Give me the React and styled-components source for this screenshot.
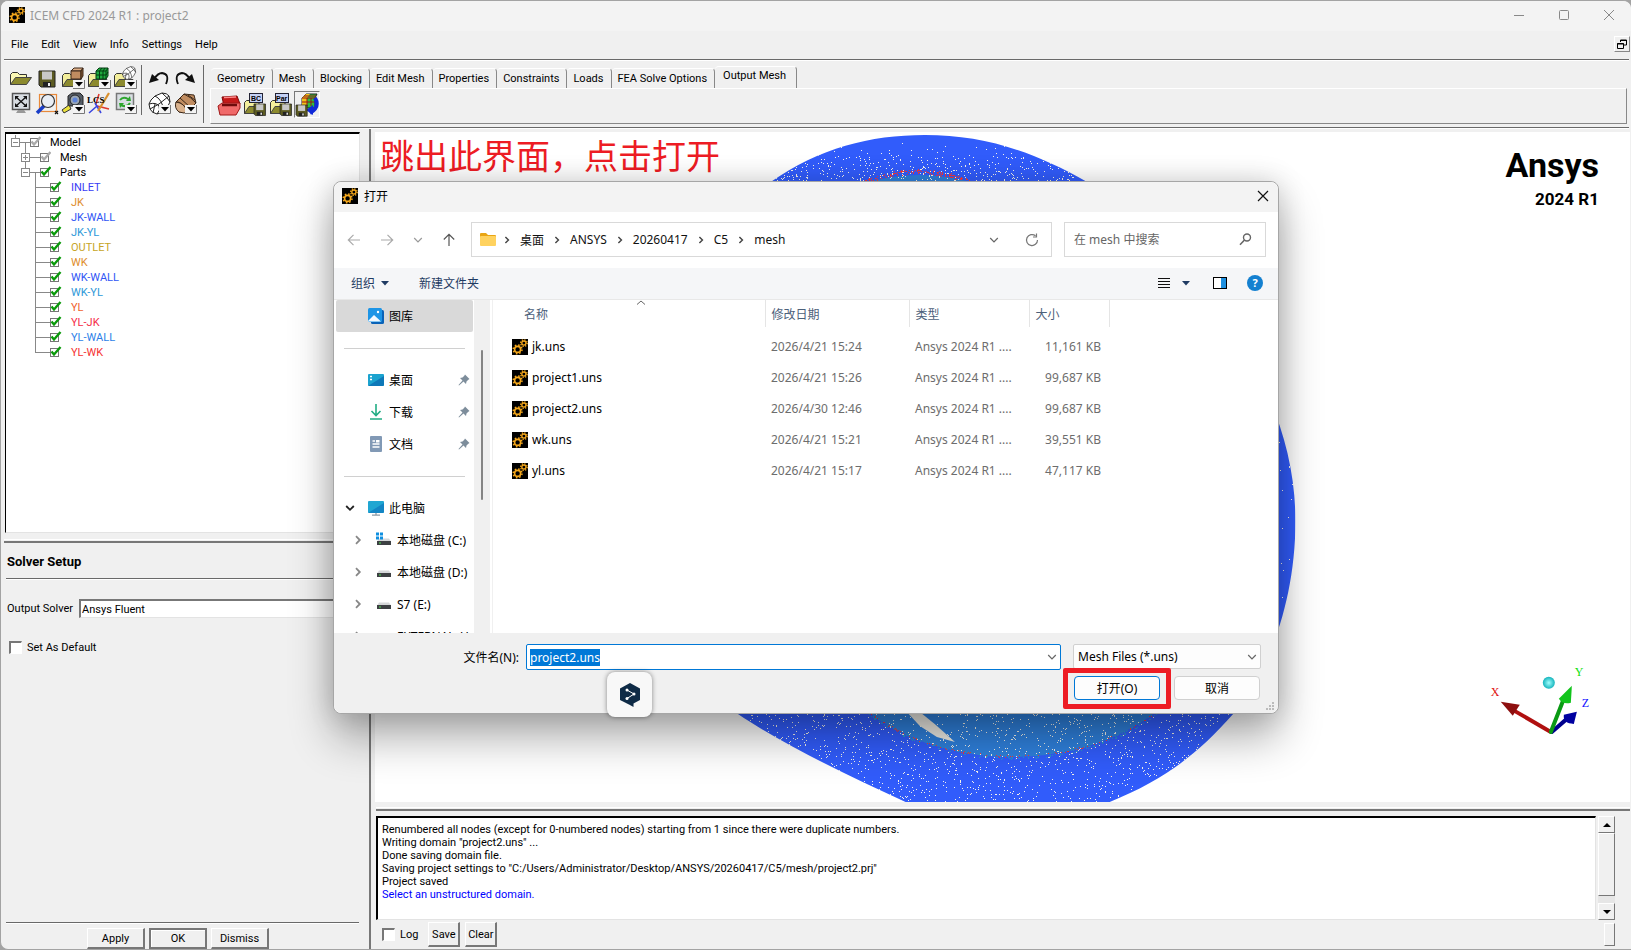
import React, { useEffect, useRef } from 'react' ;
import styled, { createGlobalStyle, css } from 'styled-components' ;

const uiFont = `Roboto, "Liberation Sans", sans-serif` ;
const winFont = `"Noto Sans", "Noto Sans CJK SC", sans-serif` ;

const GlobalStyle = createGlobalStyle`
    * { box-sizing : border-box ; }
    body {
        margin : 0 ;
        background : #a3a3a3 ;
        font-family : ${uiFont} ;
        font-size : 11px ;
        color : #000 ;
    }
    button, input, select {
        font : inherit ;
        color : inherit ;
        margin : 0 ;
    }
    svg { display : block ; flex : none ; }
`;

// main window
const Window = styled.div`
    position : relative ;
    height : 100vh ;
    min-height : 720px ;
    display : flex ;
    flex-direction : column ;
    background : #f0f0f0 ;
    border : 1px solid #a3a3a3 ;
    border-right : 0 ;
    border-radius : 8px 8px 0 8px ;
    overflow : hidden ;
`;

const TitleBar = styled.header`
    height : 30px ;
    padding : 0 0 2px 8px ;
    display : flex ;
    align-items : center ;
    gap : 5px ;
    background : #f3f3f3 ;
    color : #999 ;
    font-family : ${winFont} ;
    font-size : 12px ;
`;

const WindowButtons = styled.div`
    margin-left : auto ;
    display : flex ;
`;

const PlainButton = styled.button`
    padding : 0 ;
    border : 0 ;
    background : none ;
    display : flex ;
    align-items : center ;
    justify-content : center ;
`;

const WindowButton = styled(PlainButton)`
    width : 45px ;
    height : 28px ;
`;

const MenuBar = styled.nav`
    height : 28px ;
    margin : 0 1px 0 3px ;
    padding : 0 0 2px 7px ;
    display : flex ;
    align-items : center ;
    gap : 13px ;
`;

const RestoreButton = styled(PlainButton)`
    width : 16px ;
    height : 16px ;
    margin-left : auto ;
    border : 1px solid #fff ;
    border-right-color : #888 ;
    border-bottom-color : #888 ;
`;

const Rule = styled.div`
    height : 2px ;
    flex : none ;
    margin : ${props => props.$inset ? '0 10px 0 5px' : '0 2px 0 3px'} ;
    background : #fff ;
    border-top : 1px solid #696969 ;
`;

const ToolArea = styled.div`
    height : 66px ;
    padding : 4px 4px 0 7px ;
    display : flex ;
`;

const IconGrid = styled.div`
    display : grid ;
    grid-template-columns : repeat(${props => props.$cols}, 26px) ;
    grid-auto-rows : 25px ;
    align-content : start ;
    height : ${props => props.$tall ? '58px' : '50px'} ;
    padding-right : ${props => props.$tall ? '5px' : '3px'} ;
    margin-right : 4px ;
    border-right : 1px solid #696969 ;
`;

const Notebook = styled.div`
    flex : 1 ;
    min-width : 0 ;
    margin-left : 2px ;
    display : flex ;
    flex-direction : column ;
`;

const TabRow = styled.div`
    height : 23px ;
    padding-left : 1px ;
    display : flex ;
    align-items : flex-end ;
`;

const Tab = styled.button`
    height : ${props => props.$active ? '22px' : '20px'} ;
    padding : ${props => props.$active ? '0 10px 5px 8px' : '0 7px 1px 6px'} ;
    border : 0 ;
    border-top : 1px solid #fff ;
    border-right : 1px solid #888 ;
    border-radius : 4px 4px 0 0 ;
    background : #f0f0f0 ;
    white-space : nowrap ;
`;

const ToolPane = styled.div`
    height : 36px ;
    padding : 2px 0 0 5px ;
    display : flex ;
    border : 1px solid #fff ;
    border-right-color : #888 ;
    border-bottom-color : #888 ;
`;

const PaneButton = styled(PlainButton)`
    width : 26px ;
    height : 27px ;
    border : 1px solid transparent ;
    ${props => props.$active && css`border-color : #777 #fff #fff #777 ;`}
`;

const ToolButton = styled(PlainButton)`
    width : 26px ;
    height : 25px ;
`;

const Workspace = styled.div`
    flex : 1 ;
    min-height : 0 ;
    display : grid ;
    grid-template-columns : 370px minmax(0, 1fr) ;
`;

const LeftColumn = styled.aside`
    display : flex ;
    flex-direction : column ;
    min-height : 0 ;
    padding-top : 3px ;
    border-right : 2px solid #777 ;
`;

const Sunken = css`
    background : #fff ;
    border : 2px solid #000 ;
    border-right : 1px solid #e3e3e3 ;
    border-bottom : 1px solid #e3e3e3 ;
`;

const TreePane = styled.div`
    ${Sunken}
    height : 401px ;
    margin : 0 9px 0 4px ;
    padding : 1px 0 0 5px ;
    border-left-width : 1px ;
`;

const TreeRow = styled.div`
    height : 15px ;
    padding-left : ${props => props.$depth * 10}px ;
    display : flex ;
    align-items : center ;
    gap : 9px ;
    color : ${props => props.$color || '#000'} ;
    line-height : 15px ;
`;

const Sash = styled.div`
    height : 4px ;
    flex : none ;
    margin : ${props => props.$wide ? '5px 0 0 1px' : '6px 0 0 3px'} ;
    border-top : 1px solid #fff ;
    border-bottom : 2px solid #777 ;
`;

const SolverTitle = styled.h2`
    margin : 0 ;
    padding : 11px 6px 9px ;
    font-size : 13px ;
    line-height : 15px ;
`;

const SolverForm = styled.form`
    flex : 1 ;
    display : flex ;
    flex-direction : column ;
`;

const Field = styled.label`
    margin-top : 19px ;
    padding-left : 6px ;
    display : flex ;
    align-items : center ;
    gap : 6px ;
`;

const Entry = styled.input`
    flex : 1 ;
    min-width : 0 ;
    height : 19px ;
    padding : 0 1px ;
    border : 2px solid #777 ;
    border-right : 0 ;
    border-bottom : 1px solid #e3e3e3 ;
    outline : 0 ;
`;

const CheckLabel = styled.label`
    display : flex ;
    align-items : center ;
    gap : 5px ;
    padding-left : ${props => props.$form ? '8px' : '0'} ;
    margin-top : ${props => props.$form ? '23px' : '0'} ;
`;

const CheckBox = styled.input`
    appearance : none ;
    width : 13px ;
    height : 13px ;
    border : 2px solid #777 ;
    border-right : 1px solid #fff ;
    border-bottom : 1px solid #fff ;
    background : #fff ;
`;

const FormButtons = styled.div`
    display : flex ;
    gap : 4px ;
    padding : 4px 0 0 86px ;
`;

const FlatButton = styled.button`
    width : ${props => props.$small ? '32px' : '58px'} ;
    height : ${props => props.$small ? '25px' : '21px'} ;
    padding : 0 ;
    border : 1px solid #fff ;
    border-right : 2px solid #777 ;
    border-bottom : 2px solid #777 ;
    background : #f0f0f0 ;
    ${props => props.$main && css`
        border : 2px solid #777 ;
        box-shadow : inset 1px 1px #fff ;
    `}
`;

const RightColumn = styled.section`
    display : flex ;
    flex-direction : column ;
    min-height : 0 ;
    min-width : 0 ;
    padding : 3px 1px 0 4px ;
`;

const Canvas = styled.div`
    position : relative ;
    flex : 1 ;
    min-height : 0 ;
    background : #fff ;
`;

const Scene = styled.svg`
    position : absolute ;
    inset : 0 ;
    width : 100% ;
    height : 100% ;
`;

const Note = styled.p`
    position : absolute ;
    left : 5px ;
    top : 1px ;
    margin : 0 ;
    color : #ed1c24 ;
    font-family : "Noto Sans CJK SC", sans-serif ;
    font-size : 34px ;
    line-height : 44px ;
    white-space : nowrap ;
`;

const Brand = styled.div`
    position : absolute ;
    right : 31px ;
    top : 12px ;
    text-align : right ;
    font-size : 34px ;
    font-weight : bold ;
    line-height : 42px ;

    small {
        display : block ;
        font-size : 17px ;
        line-height : 26px ;
    }
`;

const LogArea = styled.div`
    margin : 5px 4px 0 1px ;
    height : 104px ;
    display : flex ;
    gap : 2px ;
`;

const LogText = styled.div`
    ${Sunken}
    flex : 1 ;
    padding : 5px 4px ;
    line-height : 13px ;

    p { margin : 0 ; }
    p:last-child { color : #00f ; }
`;

const ScrollBar = styled.div`
    width : 17px ;
    margin-right : 11px ;
    display : flex ;
    flex-direction : column ;
    background : #e6e6e6 ;
`;

const ScrollButton = styled(PlainButton)`
    height : 17px ;
    border : 1px solid #fff ;
    border-right-color : #777 ;
    border-bottom-color : #777 ;
    background : #f0f0f0 ;
`;

const ScrollThumb = styled.div`
    flex : 1 ;
    margin-bottom : 7px ;
    border : 1px solid #fff ;
    border-right-color : #777 ;
    border-bottom-color : #777 ;
    background : #f0f0f0 ;
`;

const LogTools = styled.div`
    height : 29px ;
    padding : 0 15px 0 7px ;
    display : flex ;
    align-items : center ;
    gap : 5px ;

    label { margin-right : 5px ; }
`;

const Resizer = styled.div`
    width : 11px ;
    height : 23px ;
    margin-left : auto ;
    border : 1px solid #fff ;
    border-right-color : #777 ;
    border-bottom-color : #777 ;
`;

// file dialog
const Dialog = styled.section`
    position : absolute ;
    left : 332px ;
    top : 180px ;
    width : 946px ;
    height : 533px ;
    display : flex ;
    flex-direction : column ;
    background : #fff ;
    border : 1px solid #a6a6a6 ;
    border-radius : 8px ;
    box-shadow : 0 24px 44px rgba(0, 0, 0, 0.32), 0 0 28px rgba(0, 0, 0, 0.16) ;
    font-family : ${winFont} ;
    font-size : 12px ;
`;

const DialogTitle = styled.header`
    height : 30px ;
    padding : 0 9px 2px 8px ;
    display : flex ;
    align-items : center ;
    gap : 6px ;
    background : #f3f3f3 ;
    border-radius : 8px 8px 0 0 ;

    button { margin-left : auto ; }
`;

const NavRow = styled.div`
    height : 56px ;
    padding : 0 12px 1px 13px ;
    display : flex ;
    align-items : center ;
`;

const NavButtons = styled.div`
    width : 124px ;
    display : flex ;
    align-items : center ;
    gap : 19px ;
`;

const AddressBar = styled.div`
    flex : 1 ;
    height : 35px ;
    margin-right : 12px ;
    padding : 0 12px 0 8px ;
    display : flex ;
    align-items : center ;
    gap : 7px ;
    border : 1px solid #d9d9d9 ;
`;

const Crumb = styled.a`
    margin : 0 2px ;
    color : #111 ;
    text-decoration : none ;
`;

const AddressTools = styled.div`
    margin-left : auto ;
    display : flex ;
    align-items : center ;
    gap : 26px ;
`;

const SearchBox = styled.label`
    width : 202px ;
    height : 35px ;
    padding : 0 13px 0 9px ;
    display : flex ;
    align-items : center ;
    border : 1px solid #d9d9d9 ;
`;

const SearchInput = styled.input`
    flex : 1 ;
    min-width : 0 ;
    padding : 0 ;
    border : 0 ;
    outline : 0 ;
    &::placeholder { color : #666 ; opacity : 1 ; }
`;

const CommandBar = styled.div`
    height : 32px ;
    padding : 0 15px 1px 17px ;
    display : flex ;
    align-items : center ;
    gap : 30px ;
    background : #f5f6f8 ;
    border-bottom : 1px solid #e8e8e8 ;
    color : #1f3b63 ;
`;

const Command = styled(PlainButton)`
    gap : 6px ;
`;

const CommandTools = styled.div`
    margin-left : auto ;
    display : flex ;
    align-items : center ;
    gap : 20px ;
`;

const DialogBody = styled.div`
    flex : 1 ;
    min-height : 0 ;
    display : flex ;
`;

const SideBar = styled.nav`
    width : 140px ;
    padding : 0 1px 0 2px ;
    overflow : hidden ;
`;

const SideItem = styled.button`
    width : 100% ;
    height : 32px ;
    padding : 0 3px 0 ${props => props.$pad || 32}px ;
    display : flex ;
    align-items : center ;
    gap : 5px ;
    border : 0 ;
    border-radius : 2px ;
    background : ${props => props.$active ? '#d9d9d9' : 'none'} ;
    white-space : nowrap ;
    text-align : left ;

    span { flex : 1 ; }
`;

const SideRule = styled.hr`
    height : 1px ;
    margin : 16px 8px 15px ;
    border : 0 ;
    background : #d0d0d0 ;
`;

const SideScroll = styled.div`
    width : 16px ;
    padding : 50px 7px 0 ;
    background : #f0f0f0 ;

    &::before {
        content : "" ;
        display : block ;
        height : 150px ;
        background : #858585 ;
        border-radius : 1px ;
    }
`;

const FilePane = styled.div`
    flex : 1 ;
    margin-left : 2px ;
    border-left : 1px solid #f0f0f0 ;
`;

const FileTable = styled.table`
    border-collapse : collapse ;
    table-layout : fixed ;
    width : 616px ;
    color : #6d6d6d ;
`;

const HeadCell = styled.th`
    position : relative ;
    width : ${props => props.$width}px ;
    height : 27px ;
    padding : 0 6px ;
    border-right : 1px solid #e5e5e5 ;
    color : #4c607a ;
    font-weight : normal ;
    text-align : left ;

    &:first-child { padding-left : 31px ; }
`;

const SortMark = styled.svg`
    position : absolute ;
    left : 50% ;
    top : 0 ;
    margin-left : 7px ;
`;

const FileRow = styled.tr`
    height : 31px ;
`;

const FileCell = styled.td`
    padding : 8px 8px 0 6px ;
    white-space : nowrap ;
    text-align : ${props => props.$right ? 'right' : 'left'} ;
`;

const FileName = styled.div`
    padding-left : 13px ;
    display : flex ;
    align-items : center ;
    gap : 4px ;
    color : #000 ;
`;

const DialogFooter = styled.footer`
    height : 80px ;
    padding : 11px 17px 0 ;
    display : grid ;
    grid-template-columns : 175px 1fr 188px ;
    grid-template-rows : 26px 24px ;
    row-gap : 6px ;
    column-gap : 0 ;
    background : #f0f0f0 ;
    border-radius : 0 0 8px 8px ;
`;

const NameLabel = styled.label`
    align-self : center ;
    padding-right : 7px ;
    text-align : right ;
`;

const NameBox = styled.div`
    margin-right : 12px ;
    padding : 0 3px ;
    display : flex ;
    align-items : center ;
    background : #fff ;
    border : 1px solid #0078d7 ;
    border-radius : 2px ;
`;

const NameInput = styled.input`
    flex : 1 ;
    min-width : 0 ;
    padding : 0 ;
    border : 0 ;
    outline : 0 ;
    &::selection { background : #0078d7 ; color : #fff ; }
`;

const TypeBox = styled.div`
    position : relative ;

    svg {
        position : absolute ;
        right : 4px ;
        top : 8px ;
        pointer-events : none ;
    }
`;

const TypeSelect = styled.select`
    appearance : none ;
    width : 100% ;
    height : 25px ;
    padding : 0 4px ;
    border : 1px solid #d0d0d0 ;
    border-radius : 2px ;
    background : #fdfdfd ;
`;

const Actions = styled.div`
    grid-column : 3 ;
    padding : 0 1px 0 1px ;
    display : flex ;
    justify-content : space-between ;
`;

const ActionButton = styled.button`
    position : relative ;
    width : 86px ;
    height : 24px ;
    padding : 0 ;
    border : 1px solid ${props => props.$main ? '#0078d7' : '#d0d0d0'} ;
    border-radius : 4px ;
    background : #fdfdfd ;

    ${props => props.$main && css`
        &::after {
            content : "" ;
            position : absolute ;
            inset : -9px -12px -10px -12px ;
            border : 5px solid #ed1c24 ;
            border-radius : 2px ;
        }
    `}
`;

const Grip = styled.svg`
    position : absolute ;
    right : 3px ;
    bottom : 2px ;
`;

const FloatingBadge = styled.button`
    position : absolute ;
    left : 273px ;
    bottom : -4px ;
    width : 45px ;
    height : 45px ;
    padding : 0 ;
    display : flex ;
    align-items : center ;
    justify-content : center ;
    border : 0 ;
    border-radius : 8px ;
    background : #f8f8f8 ;
    box-shadow : 0 0 5px rgba(0, 0, 0, 0.45) ;
`;

const GearIcon = () => (
    <svg width="16" height="16" viewBox="0 0 16 16" aria-hidden="true">
        <rect width="16" height="16" fill="#000" />
        <g fill="none" stroke="#f5a81c">
            <circle cx="5.6" cy="10.4" r="3" strokeWidth="1.6" />
            <circle cx="5.6" cy="10.4" r="4.4" strokeWidth="1.5" strokeDasharray="1.6 1.86" />
            <circle cx="11.9" cy="4.1" r="2.1" strokeWidth="1.3" />
            <circle cx="11.9" cy="4.1" r="3.3" strokeWidth="1.3" strokeDasharray="1.3 1.29" />
        </g>
    </svg>
) ;

const Chevron = ({ dir = 'down', size = 10, color = '#666', bold }) => {
    const turn = { down : 0, left : 90, up : 180, right : 270 } ;
    return (
        <svg width={size} height={size} viewBox="0 0 10 10" aria-hidden="true">
            <path d="M1.2 3L5 6.8L8.8 3" transform={`rotate(${turn[dir]} 5 5)`} fill="none" stroke={color} strokeWidth={bold ? 1.8 : 1.2} />
        </svg>
    ) ;
} ;

const ArrowIcon = ({ turn, color }) => (
    <svg width="14" height="14" viewBox="0 0 14 14" aria-hidden="true">
        <path d="M13 7H1.5M6.5 1.8L1.3 7L6.5 12.2" transform={`rotate(${turn} 7 7)`} fill="none" stroke={color} strokeWidth="1.2" />
    </svg>
) ;

const FolderBack = () => (
    <>
        <path d="M1.5 20.5V9.5L3.5 7.500H8.500L10.500 9.500H16V20.500Z" fill="#f3ee9b" stroke="#333" />
        <path d="M1.500 20.500L6 13.500H20L16 20.500Z" fill="#8c8a2e" stroke="#444" />
    </>
) ;

const OpenFolder = () => (
    <>
        <path d="M1.500 18.500V8.500L3.500 6.500H8.500L10.500 8.500H17.500V12" fill="#fbf8b4" stroke="#333" />
        <path d="M1.500 18.500L6.500 11.500H22.500L17.500 18.500Z" fill="#8c8a2e" stroke="#444" />
    </>
) ;

const Floppy = ({ x = 3, y = 5, s = 1 }) => (
    <g transform={`translate(${x} ${y}) scale(${s})`}>
        <path d="M0 0H16V16H2L0 14Z" fill="#5c5b22" stroke="#222" />
        <rect x="3" y="0.500" width="10" height="8" fill="#c8c8c8" />
        <rect x="4" y="11" width="8" height="5" fill="#222" />
        <rect x="9" y="12" width="2" height="3" fill="#eee" />
    </g>
) ;

const DropMark = () => (
    <>
        <rect x="12" y="14" width="11" height="8" fill="#f4f4f4" />
        <path d="M12 22.500H23.500V14" fill="none" stroke="#777" />
        <path d="M14 16H22L18 20.500Z" fill="#000" />
    </>
) ;

const MeshWire = ({ x = 0, y = 0, s = 1 }) => (
    <g transform={`translate(${x} ${y}) scale(${s})`} fill="#fff" stroke="#222" strokeWidth="1">
        <path d="M1 12Q2 8 7 4L14 1Q19 1 21 4L22 10Q20 15 16 19L9 22Q4 21 2 17Z" />
        <path d="M1 12Q8 10 11 14Q13 18 9 22M14 1Q20 6 22 10M7 4Q14 7 16 19M2 17L11 12L21 4M7 12L5 21" fill="none" />
    </g>
) ;

const Barrel = ({ x = 0, y = 0, s = 1 }) => (
    <g transform={`translate(${x} ${y}) scale(${s})`} stroke="#3a2718" strokeWidth="1">
        <path d="M2 10L10 2L20 3L22 11L13 20L5 20Z" fill="#c08c60" />
        <path d="M2 10Q8 9 13 20M10 2Q17 5 22 11M6 6L16 15M14 3L21 8" fill="none" />
        <path d="M2 10Q0 16 5 20Q11 22 13 20Q11 11 2 10Z" fill="#d9b18c" />
    </g>
) ;

const drawings = {
    open : <OpenFolder />,
    save : <Floppy x={4} y={5} />,
    geometry : (
        <>
            <FolderBack />
            <path d="M10 5L13 2H22L20 5Z" fill="#e0b088" stroke="#3a2718" />
            <rect x="10" y="5" width="10" height="8" fill="#c08c60" stroke="#3a2718" />
            <path d="M20 5L22 2V10L20 13Z" fill="#8a5c38" stroke="#3a2718" />
            <DropMark />
        </>
    ),
    mesh : (
        <>
            <FolderBack />
            <path d="M9 5L12 2H21V10L19 13H9Z" fill="#1faa3f" stroke="#053d12" />
            <path d="M9 9H19M12.500 5V13M16 5V13M9 5H19V13M19 5L21 2M19 9L21 6M12.500 5L15 2M16 5L18 2" stroke="#053d12" fill="none" />
            <DropMark />
        </>
    ),
    blocking : (
        <>
            <FolderBack />
            <MeshWire x={9} y={0} s={0.62} />
            <DropMark />
        </>
    ),
    undo : (
        <>
            <path d="M19 18Q23 8 15 7Q11 7 7 13" fill="none" stroke="#111" strokeWidth="1.800" />
            <path d="M2 17L5 8L12 14Z" fill="#111" />
        </>
    ),
    redo : (
        <>
            <path d="M5 18Q1 8 9 7Q13 7 17 13" fill="none" stroke="#111" strokeWidth="1.800" />
            <path d="M22 17L19 8L12 14Z" fill="#111" />
        </>
    ),
    fit : (
        <>
            <rect x="3.500" y="2.500" width="17" height="16" fill="#d8dde2" stroke="#555" strokeWidth="1.500" />
            <path d="M7 6L17 15M17 6L7 15" stroke="#111" strokeWidth="1.300" />
            <path d="M6 9V5H10ZM18 9V5H14ZM6 12V16H10ZM18 12V16H14Z" fill="#111" />
            <path d="M9 19H15L17 22H7Z" fill="#999" />
        </>
    ),
    zoom : (
        <>
            <rect x="4.500" y="3.500" width="17" height="17" fill="none" stroke="#e8893a" strokeWidth="1.200" />
            <path d="M9 15L2 22" stroke="#1a3ec8" strokeWidth="3.500" />
            <circle cx="13" cy="10" r="6.500" fill="#e9eef5" stroke="#333" strokeWidth="1.200" />
            <path d="M20 20L23 23M23 20L20 23" stroke="#111" strokeWidth="1.200" />
        </>
    ),
    measure : (
        <>
            <path d="M7 5L11 2H19L22 5V15H7Z" fill="#555d66" stroke="#222" />
            <circle cx="14" cy="9" r="5" fill="#9aa6b4" stroke="#222" />
            <circle cx="14" cy="9" r="2.500" fill="#5d83d8" />
            <path d="M1 19L8 14L10 18L3 22Z" fill="#ece23d" stroke="#333" />
            <DropMark />
        </>
    ),
    lcs : (
        <>
            <path d="M9 13L12 3M10 15L22 18" stroke="#e03a2e" strokeWidth="1.600" />
            <path d="M10 15L2 22M8 12L14 22" stroke="#3b46e0" strokeWidth="1.600" />
            <path d="M22 2L11 20" stroke="#d9902f" strokeWidth="2.200" />
            <text x="0" y="12" fontFamily="Liberation Serif, serif" fontSize="9" fontWeight="bold">LCS</text>
        </>
    ),
    refresh : (
        <>
            <rect x="3.500" y="2.500" width="17" height="16" fill="#d8dde2" stroke="#777" strokeWidth="1.500" />
            <path d="M7 9Q10 5 15 8M17 12Q14 17 8 14" fill="none" stroke="#2ea52e" strokeWidth="2" />
            <path d="M13 10L18 10L17 5ZM11 12L6 12L7 17Z" fill="#2ea52e" />
            <DropMark />
        </>
    ),
    wire : <><MeshWire x={1} y={1} /><DropMark /></>,
    solid : <><Barrel x={1} y={1} /><DropMark /></>,
    toolbox : (
        <>
            <path d="M5 4L20 3L23 11L7 13Z" fill="#c51a1a" stroke="#7c0808" />
            <path d="M7 4.500L19 4" stroke="#ff8a8a" strokeWidth="1.500" />
            <path d="M1 13L5 10H23V15L19 22H3Z" fill="#f06a6a" stroke="#a01818" />
            <path d="M5 12H20" stroke="#6d0c0c" strokeWidth="2.500" />
        </>
    ),
    bc : (
        <>
            <FolderBack />
            <rect x="6.500" y="0.500" width="13" height="9" fill="#c4d1f5" stroke="#223" />
            <text x="8" y="8" fontFamily="Liberation Sans, sans-serif" fontSize="7" fontWeight="bold">BC</text>
            <Floppy x={11} y={11} s={0.72} />
        </>
    ),
    par : (
        <>
            <FolderBack />
            <rect x="6.500" y="0.500" width="13" height="9" fill="#c4d1f5" stroke="#223" />
            <text x="7" y="8" fontFamily="Liberation Sans, sans-serif" fontSize="7" fontWeight="bold">Par</text>
            <Floppy x={11} y={11} s={0.72} />
        </>
    ),
    write : (
        <>
            <path d="M7 5L11 1H22L20 5V15H7Z" fill="#2fbf3c" stroke="#222" />
            <path d="M7 5L11 1H15L12 5V13H7Z" fill="#f0c419" />
            <path d="M9 3H21M7 9H20M12 5V13M16 5V13M7 5H20" stroke="#9a1414" fill="none" />
            <path d="M20 5Q25 14 15 20" fill="none" stroke="#1029d8" strokeWidth="4" />
            <path d="M11 17L18 12V22Z" fill="#1029d8" />
            <Floppy x={1} y={12} s={0.7} />
        </>
    ),
} ;

const ToolIcon = ({ name }) => (
    <svg width="24" height="24" viewBox="0 0 24 24" aria-hidden="true">{drawings[name]}</svg>
) ;

const TreeMark = ({ depth, kind, gray, last }) => (
    <svg width={depth === 2 ? 31 : 30} height="15" viewBox={depth === 2 ? '-8 0 31 15' : '0 0 30 15'} aria-hidden="true">
        <g stroke="#888" fill="none" shapeRendering="crispEdges">
            {kind && (
                <>
                    <path d="M8 7.500H19" />
                    <rect x="0.500" y="3.500" width="8" height="8" fill="#fff" />
                    <path d={kind === 'plus' ? 'M2 7.500H7M4.500 5V10' : 'M2 7.500H7'} />
                    {depth === 0 ? <path d="M4.500 0V3M14.500 8V15" /> : <path d="M4.500 0V3" />}
                    {depth === 1 && (kind === 'plus' ? <path d="M4.500 12V15" /> : <path d="M14.500 8V15" />)}
                </>
            )}
            {!kind && <path d={last ? 'M-3.500 0V7.500H11' : 'M-3.500 0V15M-3.500 7.500H11'} />}
        </g>
        <g transform={kind ? 'translate(19 0)' : 'translate(11 0)'}>
            <rect x="0.500" y="3.500" width="8" height="8" fill="#fff" stroke="#777" shapeRendering="crispEdges" />
            <path d="M1.500 6.500L4 9.500L10.500 2" fill="none" stroke={gray ? '#aaa' : '#0a9a0a'} strokeWidth="2.400" />
        </g>
    </svg>
) ;

const SideIcon = ({ name }) => (
    <svg width="16" height="16" viewBox="0 0 16 16" aria-hidden="true">
        {name === 'gallery' && (
            <>
                <rect x="3" y="2" width="13" height="14" rx="1.500" fill="#0a63b8" />
                <rect x="0" y="0" width="14" height="14" rx="1.500" fill="#1d95e6" />
                <path d="M0 13L6 7L13 13.500H0Z" fill="#f2f9ff" />
                <circle cx="10" cy="4" r="1.200" fill="#fff" />
            </>
        )}
        {name === 'desktop' && (
            <>
                <rect x="0" y="2" width="16" height="12" rx="1" fill="#1ba3cf" />
                <path d="M0 14L16 4V13L15 14Z" fill="#0e78b8" />
                <path d="M2 4.500H4M2 7.500H4" stroke="#fff" strokeWidth="1.500" />
            </>
        )}
        {name === 'download' && <path d="M8 0V11M3.500 7L8 11.500L12.500 7M2 15H14" fill="none" stroke="#22ad84" strokeWidth="1.600" />}
        {name === 'docs' && (
            <>
                <rect x="2" y="0" width="12" height="16" rx="1" fill="#8199b5" />
                <path d="M4.500 5H7M4.500 8H11.500M4.500 11H11.500" stroke="#fff" strokeWidth="1.300" />
                <rect x="8" y="4" width="3.500" height="2.500" fill="#fff" />
            </>
        )}
        {name === 'pc' && (
            <>
                <rect x="0" y="1" width="16" height="12" rx="1" fill="#20a6d2" />
                <path d="M0 13L16 3V12L15 13Z" fill="#1385c4" />
                <path d="M8 13V15M4 15.200H12" stroke="#8b99a5" strokeWidth="1.300" />
            </>
        )}
        {(name === 'drive' || name === 'system') && (
            <>
                <path d="M3 6.500H13L15 9.500H1Z" fill="#d5d7d9" />
                <rect x="1" y="9" width="14" height="4" fill="#3d4043" />
                <rect x="3" y="10.500" width="2" height="1" fill="#4ce04c" />
            </>
        )}
        {name === 'system' && <path d="M0 0.500H3V3.500H0ZM4 0.500H7V3.500H4ZM0 4.500H3V7.500H0ZM4 4.500H7V7.500H4Z" fill="#0f8fe0" />}
    </svg>
) ;

const Pin = () => (
    <svg width="12" height="12" viewBox="0 0 12 12" aria-hidden="true">
        <path d="M7 0.500L11.500 5L10.300 5.700L8.500 7.500L8 10L5.500 7.500L1 11.500L0.500 11L4.500 6.500L2 4L4.500 3.500L6.300 1.700Z" fill="#7d8d9b" />
    </svg>
) ;

const FolderIcon = () => (
    <svg width="16" height="14" viewBox="0 0 16 14" aria-hidden="true">
        <path d="M0 1Q0 0 1 0H6L8 2H15Q16 2 16 3V6H0Z" fill="#e9a513" />
        <rect x="0" y="3" width="16" height="10" rx="1" fill="#ffd25f" />
    </svg>
) ;

// fixed seed, so that the nodes stay in place between renders
const scatter = (count, seed, place) => {
    let s = seed ;
    const rnd = () => {
        s = (s * 16807) % 2147483647 ;
        return s / 2147483647 ;
    } ;
    let d = '' ;
    for (let i = 0 ; i < count ; i += 1) {
        const [x, y] = place(rnd) ;
        d += `M${Math.round(x)} ${Math.round(y)}h1v1h-1z` ;
    }
    return d ;
} ;

const topNodes = scatter(560, 77, r => [770 + r() * 320, 143 + Math.sqrt(r()) * 40]) ;
const bottomNodes = scatter(1700, 41, r => [740 + r() * 500, 706 + r() * 96]) ;
const sideNodes = scatter(20, 19, r => [1278 + r() * 14, 440 + r() * 180]) ;
const topRim = scatter(260, 7, r => {
    const a = (r() - 0.5) * 1.5 ;
    return [918 + Math.sin(a) * 112, 261 - Math.cos(a) * 92 + r() * 5] ;
}) ;
const bottomRim = scatter(260, 13, r => {
    const a = (r() - 0.5) * 1.9 ;
    return [1012 + Math.sin(a) * 190, 626 + Math.cos(a) * 128 + r() * 4] ;
}) ;
const bottomSparks = scatter(90, 29, r => {
    const a = (r() - 0.5) * 1.7 ;
    return [1012 + Math.sin(a) * 190, 626 + Math.cos(a) * 128 + r() * 2] ;
}) ;

const MeshScene = () => (
    <Scene viewBox="375 132 1255 669" preserveAspectRatio="xMidYMid slice" role="img" aria-label="Mesh model">
        <defs>
            <clipPath id="body">
                <path d="M660 330L771 182C820 148 870 135 925 135C985 135 1035 152 1087 182L1140 226C1220 300 1295 400 1295 520C1295 610 1262 680 1233 713C1190 762 1150 788 1080 812H930C870 785 790 748 738 713C690 650 650 400 660 330Z" />
            </clipPath>
            <radialGradient id="ball"><stop offset="0" stopColor="#a2ffff" /><stop offset="1" stopColor="#14b4bc" /></radialGradient>
        </defs>
        <g clipPath="url(#body)">
            <rect x="375" y="132" width="1255" height="669" fill="#315cfb" />
            <ellipse cx="920" cy="262" rx="130" ry="87" fill="#2f80dc" />
            <ellipse cx="1012" cy="626" rx="190" ry="130" fill="#2f80dc" />
            <g shapeRendering="crispEdges">
                <path d={topNodes + bottomNodes + sideNodes} fill="#f4f2ea" />
                <path d={topRim} fill="#f0393f" />
                <path d={bottomRim} fill="#2996c9" />
                <path d={bottomSparks} fill="#f03a3a" />
            </g>
            <path d="M904 708H916L936 724L955 741L937 736L920 725Z" fill="#efede6" />
        </g>
        <g strokeWidth="4" strokeLinecap="round">
            <path d="M1550 731L1512 709" stroke="#b01010" />
            <path d="M1551 731L1566 718" stroke="#00008c" />
            <path d="M1550 731L1563 698" stroke="#0a9a14" />
        </g>
        <path d="M1500 701L1519 704L1512 715Z" fill="#8d0f0f" />
        <path d="M1571 685L1558 698Q1562 704 1570 702Z" fill="#12c41c" />
        <path d="M1576 711L1563 714Q1562 723 1573 723Z" fill="#0000a0" />
        <circle cx="1548" cy="682" r="6" fill="url(#ball)" />
        <g fontFamily="Liberation Serif, serif" fontSize="12">
            <text x="1490" y="695" fill="#e01010">X</text>
            <text x="1574" y="675" fill="#10e010">Y</text>
            <text x="1581" y="706" fill="#1010ff">Z</text>
        </g>
    </Scene>
) ;

const tabs = ['Geometry', 'Mesh', 'Blocking', 'Edit Mesh', 'Properties', 'Constraints', 'Loads', 'FEA Solve Options', 'Output Mesh'] ;

const parts = [
    ['INLET', '#3a3cf5'],
    ['JK', '#de8d2b'],
    ['JK-WALL', '#2f55f5'],
    ['JK-YL', '#2d98d8'],
    ['OUTLET', '#c7a527'],
    ['WK', '#de8d2b'],
    ['WK-WALL', '#2f55f5'],
    ['WK-YL', '#2d98d8'],
    ['YL', '#f0622d'],
    ['YL-JK', '#f52c48'],
    ['YL-WALL', '#2d7fe8'],
    ['YL-WK', '#f53232'],
] ;

const files = [
    ['jk.uns', '2026/4/21 15:24', '11,161 KB'],
    ['project1.uns', '2026/4/21 15:26', '99,687 KB'],
    ['project2.uns', '2026/4/30 12:46', '99,687 KB'],
    ['wk.uns', '2026/4/21 15:21', '39,551 KB'],
    ['yl.uns', '2026/4/21 15:17', '47,117 KB'],
] ;

const drives = [
    ['system', '本地磁盘 (C:)'],
    ['drive', '本地磁盘 (D:)'],
    ['drive', 'S7 (E:)'],
    ['drive', 'EXTERNAL_U'],
] ;

const ToolGroup = ({ names, cols, tall }) => (
    <IconGrid $cols={cols} $tall={tall}>
        {names.map(name => (
            <ToolButton key={name} aria-label={name}><ToolIcon name={name} /></ToolButton>
        ))}
    </IconGrid>
) ;

const OpenDialog = () => {
    const nameRef = useRef(null) ;

    useEffect(() => {
        nameRef.current.focus() ;
        nameRef.current.select() ;
    }, []) ;

    return (
        <Dialog role="dialog" aria-label="打开">
            <DialogTitle>
                <GearIcon />
                打开
                <PlainButton aria-label="关闭">
                    <svg width="12" height="12" viewBox="0 0 12 12"><path d="M1 1L11 11M11 1L1 11" stroke="#111" strokeWidth="1.200" /></svg>
                </PlainButton>
            </DialogTitle>
            <NavRow>
                <NavButtons>
                    <PlainButton aria-label="后退"><ArrowIcon turn={0} color="#aaa" /></PlainButton>
                    <PlainButton aria-label="前进"><ArrowIcon turn={180} color="#aaa" /></PlainButton>
                    <PlainButton aria-label="最近"><Chevron color="#999" /></PlainButton>
                    <PlainButton aria-label="上移"><ArrowIcon turn={90} color="#555" /></PlainButton>
                </NavButtons>
                <AddressBar>
                    <FolderIcon />
                    {['桌面', 'ANSYS', '20260417', 'C5', 'mesh'].map(name => (
                        <React.Fragment key={name}>
                            <Chevron dir="right" size={8} color="#444" bold />
                            <Crumb href="#">{name}</Crumb>
                        </React.Fragment>
                    ))}
                    <AddressTools>
                        <PlainButton aria-label="历史"><Chevron /></PlainButton>
                        <PlainButton aria-label="刷新">
                            <svg width="14" height="14" viewBox="0 0 14 14">
                                <path d="M12.500 7A5.500 5.500 0 1 1 10.500 2.800M11.500 0.500V4H8" fill="none" stroke="#777" strokeWidth="1.200" />
                            </svg>
                        </PlainButton>
                    </AddressTools>
                </AddressBar>
                <SearchBox>
                    <SearchInput placeholder="在 mesh 中搜索" aria-label="搜索" />
                    <svg width="13" height="13" viewBox="0 0 13 13">
                        <circle cx="8" cy="4.500" r="3.500" fill="none" stroke="#666" strokeWidth="1.400" />
                        <path d="M5.500 7L1 11.800" stroke="#666" strokeWidth="1.600" />
                    </svg>
                </SearchBox>
            </NavRow>
            <CommandBar>
                <Command>组织 <svg width="8" height="5" viewBox="0 0 8 5"><path d="M0 0H8L4 4.500Z" fill="#1f3b63" /></svg></Command>
                <Command>新建文件夹</Command>
                <CommandTools>
                    <Command aria-label="视图">
                        <svg width="12" height="11" viewBox="0 0 12 11"><path d="M0 0.500H12M0 3.500H12M0 6.500H12M0 9.500H12" stroke="#111" /></svg>
                        <svg width="17" height="5" viewBox="-6 0 17 5"><path d="M0 0H8L4 4.500Z" fill="#1f3b63" /></svg>
                    </Command>
                    <Command aria-label="预览窗格">
                        <svg width="14" height="12" viewBox="0 0 14 12">
                            <rect x="0.500" y="0.500" width="13" height="11" fill="#fff" stroke="#000" />
                            <rect x="8" y="1" width="5" height="10" fill="#1e90e0" />
                        </svg>
                    </Command>
                    <Command aria-label="帮助">
                        <svg width="16" height="16" viewBox="0 0 16 16">
                            <circle cx="8" cy="8" r="8" fill="#1480d0" />
                            <text x="8" y="12" textAnchor="middle" fontSize="11" fontWeight="bold" fill="#fff">?</text>
                        </svg>
                    </Command>
                </CommandTools>
            </CommandBar>
            <DialogBody>
                <SideBar>
                    <SideItem $active><SideIcon name="gallery" /><span>图库</span></SideItem>
                    <SideRule />
                    <SideItem><SideIcon name="desktop" /><span>桌面</span><Pin /></SideItem>
                    <SideItem><SideIcon name="download" /><span>下载</span><Pin /></SideItem>
                    <SideItem><SideIcon name="docs" /><span>文档</span><Pin /></SideItem>
                    <SideRule />
                    <SideItem $pad={9}>
                        <Chevron color="#222" bold />
                        <svg width="3" height="1" />
                        <SideIcon name="pc" /><span>此电脑</span>
                    </SideItem>
                    {drives.map(([icon, name]) => (
                        <SideItem key={name} $pad={17}>
                            <Chevron dir="right" color="#888" bold />
                            <svg width="3" height="1" />
                            <SideIcon name={icon} /><span>{name}</span>
                        </SideItem>
                    ))}
                </SideBar>
                <SideScroll />
                <FilePane>
                    <FileTable>
                        <thead>
                            <tr>
                                <HeadCell $width={272}>名称<SortMark width="10" height="5" viewBox="0 0 10 5"><path d="M1 4.500L5 1L9 4.500" fill="none" stroke="#666" /></SortMark></HeadCell>
                                <HeadCell $width={144}>修改日期</HeadCell>
                                <HeadCell $width={120}>类型</HeadCell>
                                <HeadCell $width={80}>大小</HeadCell>
                            </tr>
                        </thead>
                        <tbody>
                            {files.map(([name, date, size]) => (
                                <FileRow key={name}>
                                    <FileCell><FileName><GearIcon />{name}</FileName></FileCell>
                                    <FileCell>{date}</FileCell>
                                    <FileCell>Ansys 2024 R1 ....</FileCell>
                                    <FileCell $right>{size}</FileCell>
                                </FileRow>
                            ))}
                        </tbody>
                    </FileTable>
                </FilePane>
            </DialogBody>
            <DialogFooter>
                <NameLabel htmlFor="file-name">文件名(N):</NameLabel>
                <NameBox>
                    <NameInput id="file-name" ref={nameRef} defaultValue="project2.uns" />
                    <PlainButton aria-label="文件列表"><Chevron /></PlainButton>
                </NameBox>
                <TypeBox>
                    <TypeSelect aria-label="文件类型"><option>Mesh Files (*.uns)</option></TypeSelect>
                    <Chevron />
                </TypeBox>
                <Actions>
                    <ActionButton $main>打开(O)</ActionButton>
                    <ActionButton>取消</ActionButton>
                </Actions>
            </DialogFooter>
            <Grip width="9" height="9" viewBox="0 0 9 9">
                <path d="M6 0h2v2h-2zM3 3h2v2h-2zM6 3h2v2h-2zM0 6h2v2h-2zM3 6h2v2h-2zM6 6h2v2h-2z" fill="#bbb" />
            </Grip>
            <FloatingBadge aria-label="翻译">
                <svg width="20" height="24" viewBox="0 0 20 24">
                    <path d="M10 0L20 5.500V17L13.500 20.500V24L9 21.500L0 17V5.500Z" fill="#0f2b46" />
                    <path d="M7 7L14 11L7 15.500" fill="none" stroke="#fff" strokeWidth="1" />
                    <circle cx="7" cy="7" r="1.500" fill="#fff" />
                    <circle cx="14" cy="11" r="1.500" fill="#fff" />
                    <circle cx="7" cy="15.500" r="1.500" fill="#fff" />
                </svg>
            </FloatingBadge>
        </Dialog>
    ) ;
} ;

const App = () => (
    <>
        <GlobalStyle />
        <Window>
            <TitleBar>
                <GearIcon />
                ICEM CFD 2024 R1 : project2
                <WindowButtons>
                    <WindowButton aria-label="Minimize"><svg width="10" height="10"><path d="M0 5.500H10" stroke="#888" /></svg></WindowButton>
                    <WindowButton aria-label="Maximize"><svg width="10" height="10"><rect x="0.500" y="0.500" width="9" height="9" rx="1" fill="none" stroke="#888" /></svg></WindowButton>
                    <WindowButton aria-label="Close"><svg width="10" height="10"><path d="M0 0L10 10M10 0L0 10" stroke="#888" /></svg></WindowButton>
                </WindowButtons>
            </TitleBar>
            <MenuBar>
                {['File', 'Edit', 'View', 'Info', 'Settings', 'Help'].map(name => (
                    <PlainButton key={name}>{name}</PlainButton>
                ))}
                <RestoreButton aria-label="Restore">
                    <svg width="10" height="10"><path d="M3.500 3V1H9.500V6H7M3 1.500H10M0.500 4.500H6.500V9.500H0.500ZM0 5H7" fill="none" stroke="#000" /></svg>
                </RestoreButton>
            </MenuBar>
            <Rule />
            <ToolArea>
                <ToolGroup cols={5} names={['open', 'save', 'geometry', 'mesh', 'blocking', 'fit', 'zoom', 'measure', 'lcs', 'refresh']} />
                <ToolGroup cols={2} tall names={['undo', 'redo', 'wire', 'solid']} />
                <Notebook>
                    <TabRow>
                        {tabs.map((name, index) => (
                            <Tab key={name} $active={index === tabs.length - 1}>{name}</Tab>
                        ))}
                    </TabRow>
                    <ToolPane>
                        {['toolbox', 'bc', 'par', 'write'].map(name => (
                            <PaneButton key={name} $active={name === 'write'} aria-label={name}><ToolIcon name={name} /></PaneButton>
                        ))}
                    </ToolPane>
                </Notebook>
            </ToolArea>
            <Rule />
            <Workspace>
                <LeftColumn>
                    <TreePane>
                        <TreeRow $depth={0}><TreeMark depth={0} kind="minus" gray />Model</TreeRow>
                        <TreeRow $depth={1}><TreeMark depth={1} kind="plus" gray />Mesh</TreeRow>
                        <TreeRow $depth={1}><TreeMark depth={1} kind="minus" />Parts</TreeRow>
                        {parts.map(([name, color], index) => (
                            <TreeRow key={name} $depth={2} $color={color}>
                                <TreeMark depth={2} last={index === parts.length - 1} />{name}
                            </TreeRow>
                        ))}
                    </TreePane>
                    <Sash />
                    <SolverTitle>Solver Setup</SolverTitle>
                    <Rule $inset />
                    <SolverForm onSubmit={e => e.preventDefault()}>
                        <Field>Output Solver <Entry defaultValue="Ansys Fluent" /></Field>
                        <CheckLabel $form><CheckBox type="checkbox" />Set As Default</CheckLabel>
                    </SolverForm>
                    <Rule $inset />
                    <FormButtons>
                        <FlatButton>Apply</FlatButton>
                        <FlatButton $main>OK</FlatButton>
                        <FlatButton>Dismiss</FlatButton>
                    </FormButtons>
                </LeftColumn>
                <RightColumn>
                    <Canvas>
                        <MeshScene />
                        <Note>跳出此界面，点击打开</Note>
                        <Brand>Ansys<small>2024 R1</small></Brand>
                    </Canvas>
                    <Sash $wide />
                    <LogArea>
                        <LogText>
                            <p>Renumbered all nodes (except for 0-numbered nodes) starting from 1 since there were duplicate numbers.</p>
                            <p>Writing domain "project2.uns" ...</p>
                            <p>Done saving domain file.</p>
                            <p>Saving project settings to "C:/Users/Administrator/Desktop/ANSYS/20260417/C5/mesh/project2.prj"</p>
                            <p>Project saved</p>
                            <p>Select an unstructured domain.</p>
                        </LogText>
                        <ScrollBar>
                            <ScrollButton aria-label="Scroll up"><svg width="8" height="4"><path d="M0 4L4 0L8 4Z" /></svg></ScrollButton>
                            <ScrollThumb />
                            <ScrollButton aria-label="Scroll down"><svg width="8" height="4"><path d="M0 0L4 4L8 0Z" /></svg></ScrollButton>
                        </ScrollBar>
                    </LogArea>
                    <LogTools>
                        <CheckLabel><CheckBox type="checkbox" />Log</CheckLabel>
                        <FlatButton $small>Save</FlatButton>
                        <FlatButton $small>Clear</FlatButton>
                        <Resizer />
                    </LogTools>
                </RightColumn>
            </Workspace>
            <OpenDialog />
        </Window>
    </>
) ;

export default App ;
